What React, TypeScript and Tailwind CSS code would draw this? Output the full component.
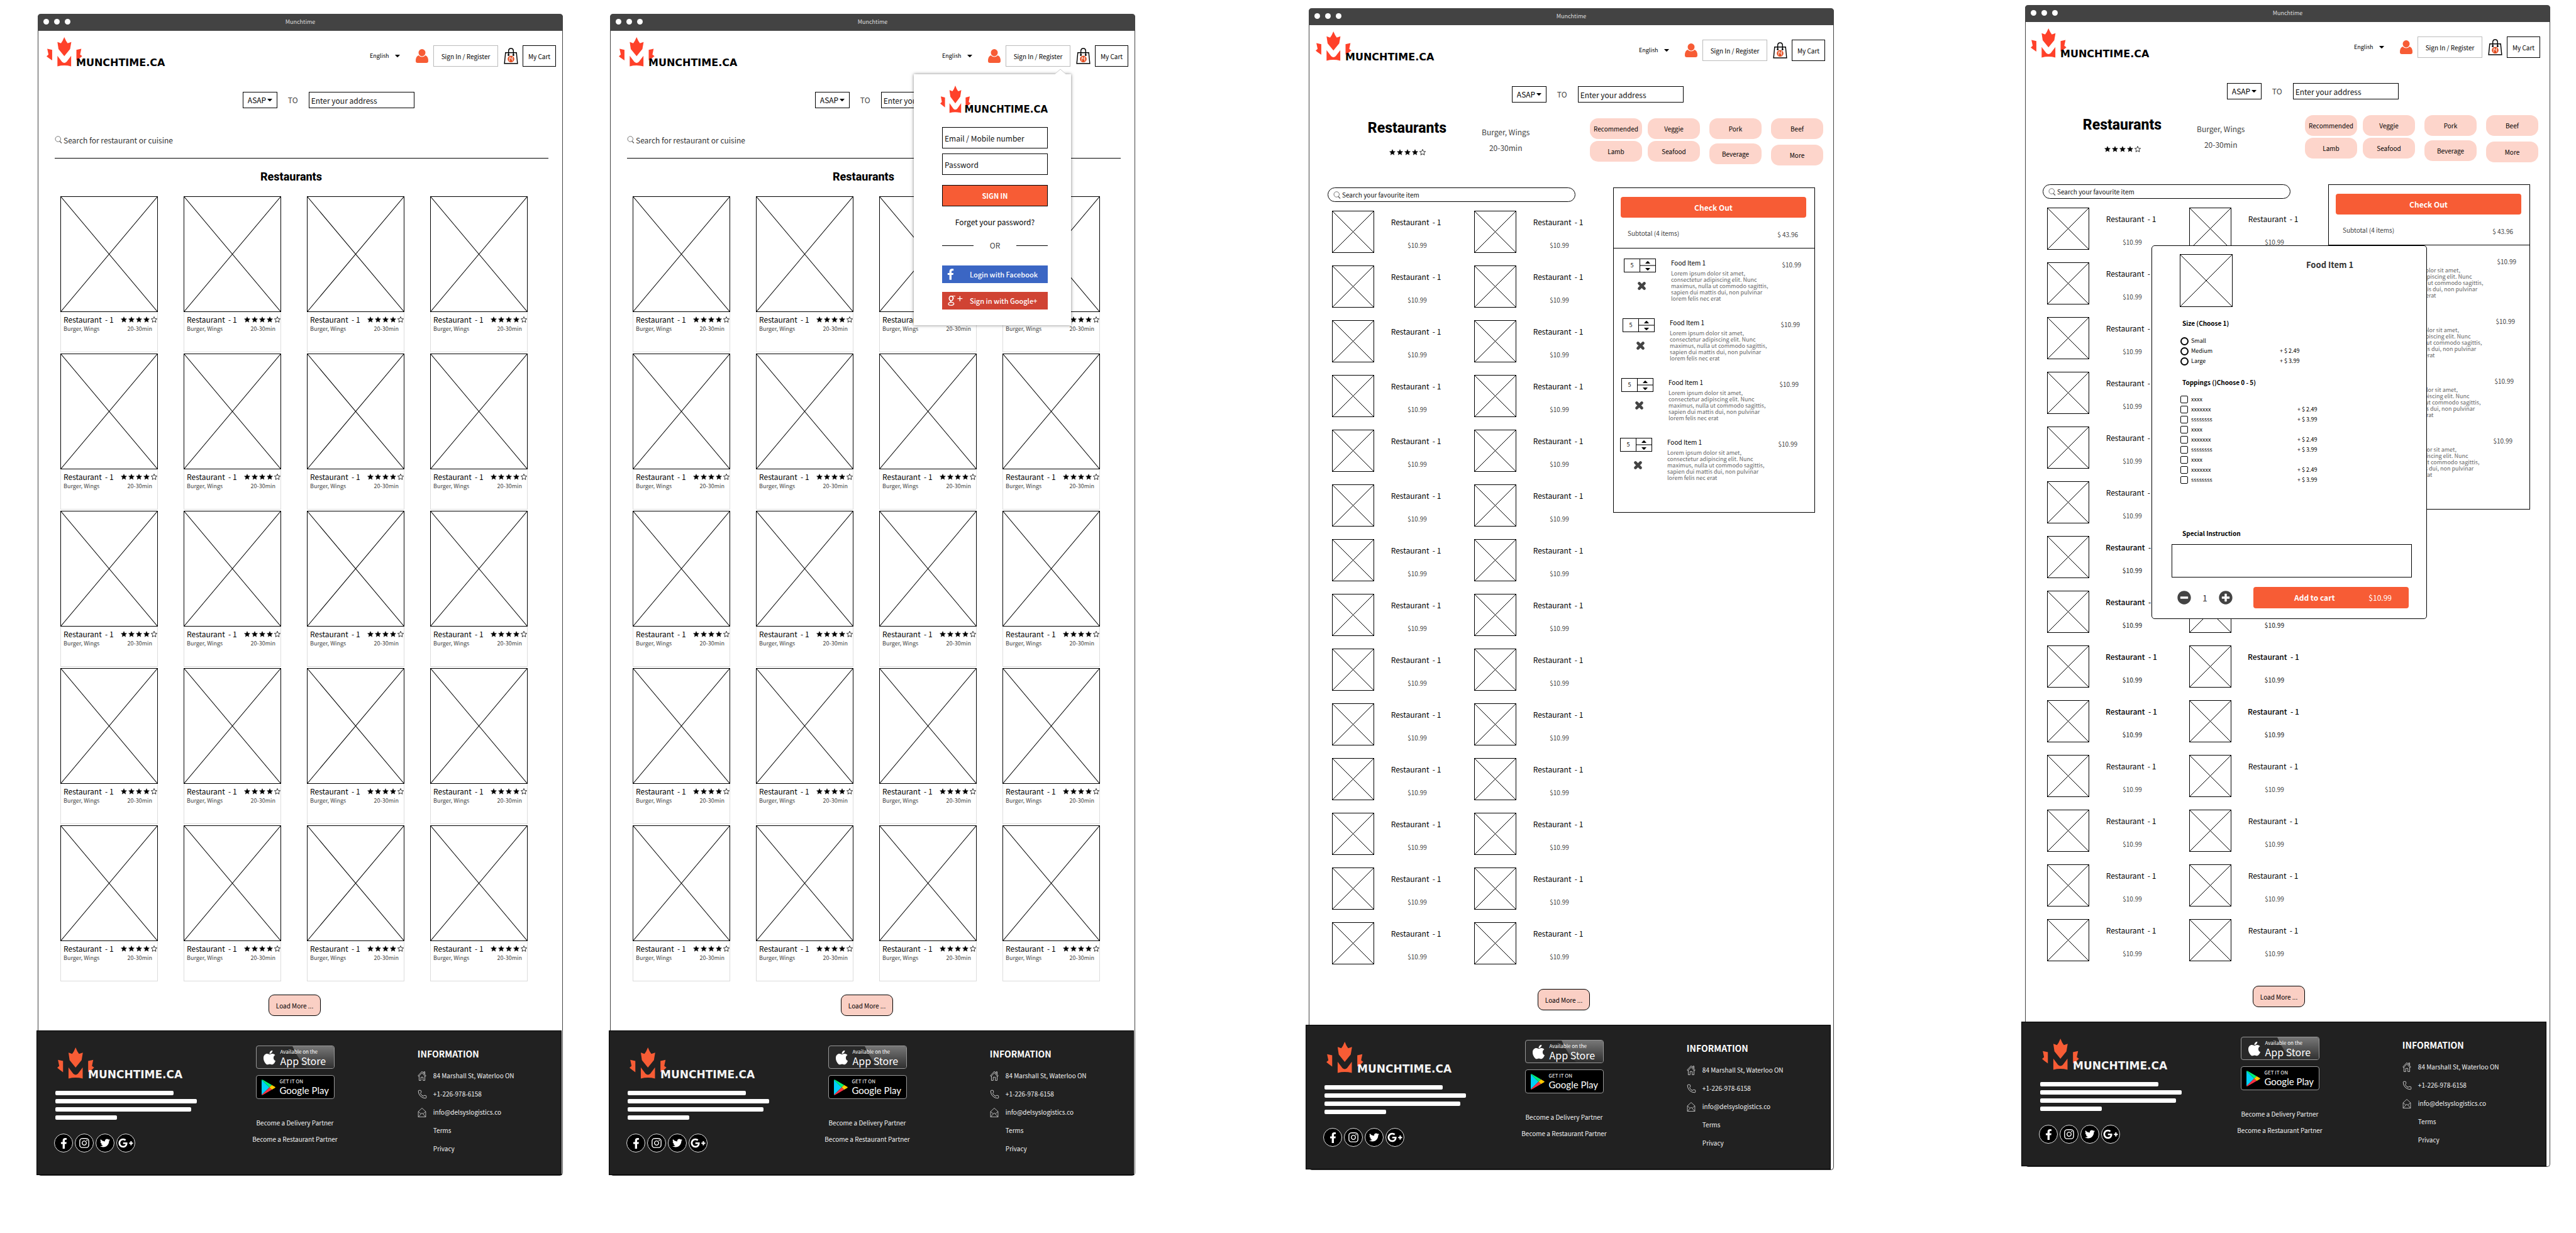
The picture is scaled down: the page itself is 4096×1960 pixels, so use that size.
import type { ReactNode } from 'react';
import {
  FaApple,
  FaFacebookF,
  FaGooglePlusG,
  FaInstagram,
  FaMinusCircle,
  FaPlusCircle,
  FaTwitter,
} from 'react-icons/fa';
import { Phone } from 'lucide-react';

/* ---------- drawings ---------- */

const logoSizes = {
  header: { leaf: 'h-[47px] w-[57px] text-[#ff412a]', word: 'text-[16px] leading-[12px] text-black' },
  popover: { leaf: 'h-[44px] w-[53px] text-[#ff412a]', word: 'text-[15px] leading-[11px] text-black' },
  footer: { leaf: 'h-[50px] w-[59px] text-[#f75c35]', word: 'text-[17px] leading-[13px] text-[#f5f5f5]' },
};

function Logo({ size }: { size: keyof typeof logoSizes }) {
  const s = logoSizes[size];
  return (
    <a href="#home" className="flex items-end">
      <svg viewBox="25 34 204 170" preserveAspectRatio="none" className={s.leaf} fill="currentColor" aria-hidden="true">
        <path d="M126 34 L136 56 L145 69 L166 62 L159 103 L126 143 L93 103 L87 62 L107 69 L116 56 Z" />
        <path d="M87 142 L113 176 Q126 188 139 176 L165 142 V202 Q126 192 87 202 Z" />
        <path d="M195 107 L223 101 L216 134 L228 143 L218 152 L195 168 Z" />
        <path d="M57 107 L29 101 L36 134 L25 144 L36 153 L57 168 Z" />
      </svg>
      <span className={`-ml-[10px] font-['DejaVu_Sans',sans-serif] font-bold ${s.word}`}>MUNCHTIME.CA</span>
    </a>
  );
}

function Star({ filled }: { filled: boolean }) {
  return (
    <svg
      viewBox="0 0 20 20"
      className="size-[10px]"
      fill={filled ? '#000' : 'none'}
      stroke="#000"
      strokeWidth={filled ? 0.6 : 1.6}
    >
      <path d="M10 1 L12.7 7.1 L19.3 7.7 L14.3 12.1 L15.8 18.7 L10 15.2 L4.2 18.7 L5.7 12.1 L0.7 7.7 L7.3 7.1 Z" />
    </svg>
  );
}

function Stars() {
  return (
    <span className="flex gap-[2px]" role="img" aria-label="4 out of 5 stars">
      {[true, true, true, true, false].map((f, i) => (
        <Star key={i} filled={f} />
      ))}
    </span>
  );
}

function Caret({ className }: { className: string }) {
  return (
    <svg viewBox="0 0 10 5" className={`h-[4px] w-[8px] ${className}`} aria-hidden="true">
      <path d="M0 0 H10 L5.8 4.6 Q5 5 4.2 4.6 Z" fill="#000" />
    </svg>
  );
}

function Placeholder({ className }: { className: string }) {
  return (
    <div className={`border border-black ${className}`}>
      <svg viewBox="0 0 100 100" preserveAspectRatio="none" className="block size-full" aria-hidden="true">
        <path d="M0 0 L100 100 M100 0 L0 100" stroke="#000" strokeWidth="1" vectorEffect="non-scaling-stroke" />
      </svg>
    </div>
  );
}

function SearchIcon() {
  return (
    <svg viewBox="0 0 24 24" className="size-[12px] shrink-0" fill="none" stroke="#555" strokeWidth="1.6" aria-hidden="true">
      <circle cx="10.5" cy="10" r="8.5" />
      <path d="M16 17 L22 23" strokeWidth="2.6" />
    </svg>
  );
}

function UserIcon() {
  return (
    <svg viewBox="0 0 40 44" className="h-[22px] w-[20px]" fill="#f75c35" aria-hidden="true">
      <ellipse cx="20" cy="11.5" rx="11" ry="11.5" />
      <path d="M9 20 Q14 25 20 25 Q26 25 31 20 Q40 23 40 38 Q40 44 34 44 H6 Q0 44 0 38 Q0 23 9 20 Z" />
    </svg>
  );
}

function BagIcon() {
  return (
    <svg viewBox="0 0 46 54" className="h-[26px] w-[23px]" aria-hidden="true">
      <path d="M5 16 H41 L44.5 52 H1.5 Z" fill="#fff" stroke="#000" strokeWidth="3" />
      <path d="M15 24 V11 Q15 2 23 2 Q31 2 31 11 V24" fill="none" stroke="#000" strokeWidth="3" />
      <circle cx="15" cy="24" r="3" fill="#000" />
      <circle cx="31" cy="24" r="3" fill="#000" />
      <circle cx="23" cy="37" r="11" fill="#e2491c" />
      <path d="M18 30 V44 M21 30 V36 H18 M28 44 V30 Q25 32 25 38 H28" fill="none" stroke="#fff" strokeWidth="1.8" />
    </svg>
  );
}

function CrossIcon() {
  return (
    <svg viewBox="0 0 26 26" className="size-[15px]" stroke="#434343" strokeWidth="8" strokeLinecap="round" aria-hidden="true">
      <path d="M6 6 L20 20 M20 6 L6 20" />
    </svg>
  );
}

function HomeIcon() {
  return (
    <svg viewBox="0 0 24 28" className="h-[16px] w-[14px]" fill="none" stroke="#d8d8d8" strokeWidth="1.5" aria-hidden="true">
      <path d="M1 14 L12 2 L23 14 L21 16 L12 6 L3 16 Z M4 15 V27 H9 V18 H15 V27 H20 V15 M17 7 V3 H20 V10" />
    </svg>
  );
}

function MailIcon() {
  return (
    <svg viewBox="0 0 26 28" className="h-[15px] w-[14px]" fill="none" stroke="#d8d8d8" strokeWidth="1.5" aria-hidden="true">
      <path d="M2 11 L13 1 L24 11 V27 H2 Z M2 11 L10 18 M24 11 L16 18 M2 27 L13 15 L24 27" />
    </svg>
  );
}

function PlayIcon() {
  return (
    <svg viewBox="0 0 68 86" className="h-[25px] w-[22px]" preserveAspectRatio="none" aria-hidden="true">
      <path d="M0 2 L38 43 L0 84 Z" fill="#00d0f8" />
      <path d="M0 2 Q2 0 6 2 L50 30 L38 43 Z" fill="#00f076" />
      <path d="M50 30 L66 40 Q69 43 66 46 L50 56 L38 43 Z" fill="#ffc900" />
      <path d="M0 84 Q2 87 6 84 L50 56 L38 43 Z" fill="#f83244" />
    </svg>
  );
}

function GooglePlusMark() {
  return (
    <svg viewBox="0 0 72 48" className="h-[16px] w-[24px]" fill="none" stroke="#fff" aria-hidden="true">
      <ellipse cx="16" cy="13" rx="9" ry="11" strokeWidth="5" />
      <path d="M16 2 H36 M24 4 Q29 8 27 15" strokeWidth="3" />
      <path d="M15 24 Q10 28 18 31 Q31 34 29 40 Q26 46 15 46 Q3 46 3 39 Q4 32 18 31" strokeWidth="4" />
      <path d="M58 2 V26 M46 14 H70" strokeWidth="4" />
    </svg>
  );
}

/* ---------- shared parts ---------- */

function Header() {
  return (
    <header className="flex items-end justify-between pt-[10px] pr-[10px] pl-[13px]">
      <Logo size="header" />
      <div className="flex items-center">
        <span className="relative mr-[25px] flex items-center">
          <select aria-label="Language" className="w-[48px] appearance-none bg-transparent text-[9px] leading-[12px]">
            <option>English</option>
          </select>
          <Caret className="pointer-events-none absolute right-0" />
        </span>
        <UserIcon />
        <button className="ml-[8px] h-[34px] w-[103px] border border-[#bbb] text-[10px]">Sign In / Register</button>
        <span className="mr-[7px] ml-[9px]">
          <BagIcon />
        </span>
        <button className="h-[34px] w-[53px] border border-black text-[10px]">My Cart</button>
      </div>
    </header>
  );
}

function DeliveryBar() {
  return (
    <form className="mt-[40px] flex items-center pl-[39%] text-[12px]">
      <span className="relative flex items-center">
        <select aria-label="Delivery time" className="h-[26px] w-[55px] appearance-none border border-black bg-white pl-[7px]">
          <option>ASAP</option>
        </select>
        <Caret className="pointer-events-none absolute right-[8px]" />
      </span>
      <span className="mx-[17px] text-[#434343]">TO</span>
      <input
        aria-label="Address"
        placeholder="Enter your address"
        className="h-[26px] w-[168px] border border-black px-[3px] placeholder:text-[#111]"
      />
    </form>
  );
}

function LoadMore({ className }: { className: string }) {
  return (
    <div className={`flex justify-center pr-[18px] pb-[23px] ${className}`}>
      <button className="h-[34px] w-[83px] rounded-[9px] border border-black bg-[#facfc4] text-[10px]">Load More ...</button>
    </div>
  );
}

function SocialLink({ label, children }: { label: string; children: ReactNode }) {
  return (
    <a
      href="#social"
      aria-label={label}
      className="flex size-[30px] items-center justify-center rounded-full border border-[#ddd] bg-black text-white"
    >
      {children}
    </a>
  );
}

function Footer({ className }: { className: string }) {
  return (
    <footer
      className={`relative grid h-[230px] grid-cols-[340fr_142fr_353fr] border border-black bg-[#212121] text-[10px] leading-[14px] text-[#f2f2f2] ${className}`}
    >
      <div className="pt-[26px] pl-[29px]">
        <div className="pl-[3px]">
          <Logo size="footer" />
        </div>
        <div className="mt-[19px] flex flex-col gap-[6px]">
          <div className="h-[7px] w-[188px] rounded-[2px] bg-white" />
          <div className="h-[7px] w-[225px] rounded-[2px] bg-white" />
          <div className="h-[7px] w-[216px] rounded-[2px] bg-white" />
          <div className="h-[7px] w-[98px] rounded-[2px] bg-white" />
        </div>
        <div className="mt-[22px] -ml-[2px] flex gap-[3px]">
          <SocialLink label="Facebook">
            <FaFacebookF className="size-[17px]" />
          </SocialLink>
          <SocialLink label="Instagram">
            <FaInstagram className="size-[18px]" />
          </SocialLink>
          <SocialLink label="Twitter">
            <FaTwitter className="size-[16px]" />
          </SocialLink>
          <SocialLink label="Google Plus">
            <FaGooglePlusG className="size-[24px]" />
          </SocialLink>
        </div>
      </div>
      <div className="flex flex-col items-center pt-[23px]">
        <a
          href="#app-store"
          className="relative flex h-[37px] w-[125px] items-center overflow-hidden rounded-[4px] border border-[#999] bg-[#292929] pl-[10px] text-white"
        >
          <svg viewBox="0 0 125 37" preserveAspectRatio="none" className="absolute inset-0 size-full" aria-hidden="true">
            <defs>
              <linearGradient id="shine" x1="0" y1="0" x2="0" y2="1">
                <stop offset="0" stopColor="#777" />
                <stop offset="1" stopColor="#303030" />
              </linearGradient>
            </defs>
            <path d="M58 0 H125 V37 H82 Q68 24 58 0 Z" fill="url(#shine)" />
          </svg>
          <FaApple className="relative h-[26px] w-[21px]" />
          <span className="relative ml-[7px] flex flex-col">
            <span className="text-[8px] leading-[10px]">Available on the</span>
            <span className="text-[16px] leading-[18px]">App Store</span>
          </span>
        </a>
        <a
          href="#google-play"
          className="mt-[10px] flex h-[38px] w-[125px] items-center rounded-[4px] border border-[#999] bg-black pl-[8px] text-white"
        >
          <PlayIcon />
          <span className="ml-[7px] flex flex-col">
            <span className="text-[8px] leading-[10px]">GET IT ON</span>
            <span className="font-['Lato',sans-serif] text-[15px] leading-[18px]">Google Play</span>
          </span>
        </a>
        <a href="#delivery" className="mt-[31px]">
          Become a Delivery Partner
        </a>
        <a href="#restaurant" className="mt-[12px] whitespace-nowrap">
          Become a Restaurant Partner
        </a>
      </div>
      <div className="pt-[26px] pl-[124px]">
        <h2 className="text-[14px] leading-[20px] font-bold text-white">INFORMATION</h2>
        <address className="mt-[18px] flex flex-col gap-[15px] not-italic">
          <span className="flex h-[14px] items-center gap-[11px]">
            <HomeIcon />
            84 Marshall St, Waterloo ON
          </span>
          <span className="flex h-[14px] items-center gap-[10px]">
            <Phone className="size-[15px]" strokeWidth={1.3} />
            +1-226-978-6158
          </span>
          <a href="mailto:info@delsyslogistics.co" className="flex h-[14px] items-center gap-[11px]">
            <MailIcon />
            info@delsyslogistics.co
          </a>
          <a href="#terms" className="pl-[25px]">
            Terms
          </a>
          <a href="#privacy" className="pl-[25px]">
            Privacy
          </a>
        </address>
      </div>
    </footer>
  );
}

function BrowserWindow({
  className,
  bodyClass,
  footerClass,
  overlay,
  children,
}: {
  className: string;
  bodyClass: string;
  footerClass: string;
  overlay?: ReactNode;
  children: ReactNode;
}) {
  return (
    <section className={`relative self-start rounded-[5px] border-x border-b border-[#434343] bg-white ${className}`}>
      <div className="relative -mx-px flex h-[27px] items-center gap-[8px] rounded-t-[5px] bg-[#434343] pb-[2px] pl-[9px]">
        <span className="size-[9px] rounded-full bg-white" />
        <span className="size-[9px] rounded-full bg-white" />
        <span className="size-[9px] rounded-full bg-white" />
        <span className="absolute inset-x-0 text-center text-[9px] leading-[12px] text-[#ddd]">Munchtime</span>
      </div>
      <div className={bodyClass}>
        <Header />
        <DeliveryBar />
        {children}
      </div>
      <Footer className={footerClass} />
      {overlay}
    </section>
  );
}

/* ---------- restaurant list ---------- */

function RestaurantCard() {
  return (
    <article>
      <Placeholder className="aspect-[155/184]" />
      <div className="border-x border-b border-[#dcdcdc] pt-[4px] pb-[30px] pl-[4px]">
        <div className="flex items-center justify-between">
          <h3 className="text-[12px] leading-[16px] whitespace-pre">{'Restaurant  - 1'}</h3>
          <Stars />
        </div>
        <div className="mt-px flex justify-between pr-[8px] text-[9px] leading-[12px] text-[#434343]">
          <span>Burger, Wings</span>
          <span>20-30min</span>
        </div>
      </div>
    </article>
  );
}

function RestaurantList() {
  return (
    <main>
      <label className="mt-[40px] mr-[22px] ml-[26px] flex items-center gap-[2px] border-b border-black pb-[19px]">
        <SearchIcon />
        <input
          aria-label="Search restaurants"
          placeholder="Search for restaurant or cuisine"
          className="h-[20px] flex-1 text-[12px] placeholder:text-[#333]"
        />
      </label>
      <h1 className="mt-[17px] pr-[29px] text-center font-['Roboto',sans-serif] text-[18px] leading-[24px] font-extrabold">
        Restaurants
      </h1>
      <div className="mt-[19px] grid grid-cols-4 gap-x-[41px] gap-y-[2px] pr-[55px] pl-[35px]">
        {Array.from({ length: 20 }, (_, i) => (
          <RestaurantCard key={i} />
        ))}
      </div>
      <LoadMore className="mt-[21px]" />
    </main>
  );
}

function LoginPopover() {
  return (
    <div className="absolute top-[96px] right-[101px] w-[250px] bg-white pr-[37px] pb-[25px] pl-[45px] text-[12px] leading-[16px] shadow-[0_0_5px_rgba(0,0,0,0.5)]">
      <svg viewBox="0 0 18 9" className="absolute -top-[8px] right-[8px] h-[9px] w-[18px] overflow-visible" aria-hidden="true">
        <path d="M0 8 L9 0 L18 8" fill="#fff" stroke="#ccc" strokeWidth="1" />
        <path d="M0 9 L9 1 L18 9 Z" fill="#fff" />
      </svg>
      <form>
        <div className="-ml-[3px] pt-[18px]">
          <Logo size="popover" />
        </div>
        <input
          aria-label="Email or mobile number"
          placeholder="Email / Mobile number"
          className="mt-[22px] block h-[34px] w-full border border-black px-[3px] placeholder:text-[#111]"
        />
        <input
          type="password"
          aria-label="Password"
          placeholder="Password"
          className="mt-[8px] block h-[34px] w-full border border-black px-[3px] placeholder:text-[#111]"
        />
        <button className="mt-[16px] block h-[34px] w-full border border-black bg-[#f75c35] text-[11px] font-bold text-white">
          SIGN IN
        </button>
        <a href="#forgot" className="mt-[17px] block text-center">
          Forget your password?
        </a>
        <div className="mt-[21px] flex items-center justify-between text-[#434343]">
          <span className="h-px w-[50px] bg-black" />
          OR
          <span className="h-px w-[50px] bg-black" />
        </div>
        <button className="mt-[24px] flex h-[28px] w-full items-center bg-[#3b66c4] text-[11px] font-medium text-white">
          <span className="flex w-[44px] pl-[8px]">
            <FaFacebookF className="h-[18px] w-[11px]" />
          </span>
          Login with Facebook
        </button>
        <button className="mt-[14px] flex h-[28px] w-full items-center bg-[#d04333] text-[11px] font-medium text-white">
          <span className="flex w-[44px] pl-[9px]">
            <GooglePlusMark />
          </span>
          Sign in with Google+
        </button>
      </form>
    </div>
  );
}

/* ---------- restaurant menu ---------- */

const categories = [
  { top: 'Recommended', bottom: 'Lamb', className: 'gap-[3px]' },
  { top: 'Veggie', bottom: 'Seafood', className: 'ml-[9px] gap-[3px]' },
  { top: 'Pork', bottom: 'Beverage', className: 'ml-[15px] gap-[7px]' },
  { top: 'Beef', bottom: 'More', className: 'ml-[15px] gap-[9px]' },
];

const chip = 'h-[33px] w-[83px] rounded-[13px] bg-[#fdd5cb]';

function MenuItem({ strong }: { strong: boolean }) {
  return (
    <li className={`flex gap-[26px] ${strong ? 'font-medium' : ''}`}>
      <Placeholder className="size-[67px]" />
      <div className="w-[81px] pt-[10px] text-center">
        <h3 className="text-[12px] leading-[16px] whitespace-pre">{'Restaurant  - 1'}</h3>
        <p className="mt-[23px] pl-[4px] text-[10px] leading-[12px] text-[#434343]">$10.99</p>
      </div>
    </li>
  );
}

const cartRows = ['pl-[16px] pr-[21px]', 'pl-[14px] pr-[23px]', 'pl-[12px] pr-[25px]', 'pl-[10px] pr-[27px]'];

function CartRow({ className }: { className: string }) {
  return (
    <li className={`flex h-[95px] ${className}`}>
      <div className="w-[51px]">
        <div className="flex h-[22px] border border-black">
          <input aria-label="Quantity" defaultValue="5" className="w-[25px] min-w-0 border-r border-black text-center text-[9px]" />
          <div className="flex flex-1 flex-col">
            <button aria-label="Increase" className="flex flex-1 items-center justify-center border-b border-[#777]">
              <Caret className="rotate-180" />
            </button>
            <button aria-label="Decrease" className="flex flex-1 items-center justify-center border-t border-[#777]">
              <Caret className="" />
            </button>
          </div>
        </div>
        <button aria-label="Remove" className="mt-[14px] flex w-full justify-center pl-[6px]">
          <CrossIcon />
        </button>
      </div>
      <div className="ml-[24px]">
        <h3 className="text-[10px] leading-[14px]">Food Item 1</h3>
        <p className="mt-[5px] text-[9px] leading-[10px] whitespace-nowrap text-[#666]">
          Lorem ipsum dolor sit amet,
          <br />
          consectetur adipiscing elit. Nunc
          <br />
          maximus, nulla ut commodo sagittis,
          <br />
          sapien dui mattis dui, non pulvinar
          <br />
          lorem felis nec erat
        </p>
      </div>
      <span className="ml-auto pt-[3px] text-[10px] leading-[14px] text-[#434343]">$10.99</span>
    </li>
  );
}

function RestaurantMenu({ strongRows }: { strongRows: number[] }) {
  return (
    <main>
      <div className="mt-[25px] flex h-[76px] pr-[13px] pl-[97px]">
        <div className="flex w-[123px] flex-col items-center">
          <h1 className="font-['Roboto',sans-serif] text-[23px] leading-[32px] font-extrabold">Restaurants</h1>
          <div className="mt-[17px]">
            <Stars />
          </div>
        </div>
        <div className="ml-[57px] flex flex-col gap-[9px] pt-[14px] text-center text-[12px] leading-[16px] text-[#434343]">
          <span>Burger, Wings</span>
          <span>20-30min</span>
        </div>
        <div className="ml-auto flex text-[10px]">
          {categories.map((c) => (
            <div key={c.top} className={`flex flex-col ${c.className}`}>
              <button className={chip}>{c.top}</button>
              <button className={chip}>{c.bottom}</button>
            </div>
          ))}
        </div>
      </div>
      <div className="mt-[34px] grid grid-cols-[454fr_321fr] items-start pr-[26px] pl-[32px]">
        <div>
          <label className="mr-[60px] flex h-[23px] items-center gap-[2px] rounded-full border border-black pl-[8px]">
            <SearchIcon />
            <input
              aria-label="Search items"
              placeholder="Search your favourite item"
              className="flex-1 text-[10px] placeholder:text-[#111]"
            />
          </label>
          <ul className="mt-[14px] grid grid-cols-[auto_auto] justify-start gap-x-[52px] gap-y-[20px] pl-[7px]">
            {Array.from({ length: 28 }, (_, i) => (
              <MenuItem key={i} strong={strongRows.includes(Math.floor(i / 2))} />
            ))}
          </ul>
        </div>
        <aside className="border border-black pb-[23px]">
          <div className="border-b border-black pt-[14px] pr-[13px] pb-[14px] pl-[11px]">
            <button className="h-[33px] w-full rounded-[4px] bg-[#f75c35] text-[12px] font-bold text-white">Check Out</button>
            <div className="mt-[18px] flex justify-between pr-[13px] pl-[11px] text-[10px] leading-[14px] text-[#434343]">
              <span>Subtotal (4 items)</span>
              <span className="pt-[2px]">$ 43.96</span>
            </div>
          </div>
          <ul className="pt-[16px]">
            {cartRows.map((c) => (
              <CartRow key={c} className={c} />
            ))}
          </ul>
        </aside>
      </div>
      <LoadMore className="mt-[39px]" />
    </main>
  );
}

const sizes = [
  { name: 'Small', price: '' },
  { name: 'Medium', price: '+ $ 2.49' },
  { name: 'Large', price: '+ $ 3.99' },
];

const toppings = [
  { name: 'xxxx', price: '' },
  { name: 'xxxxxxx', price: '+ $ 2.49' },
  { name: 'ssssssss', price: '+ $ 3.99' },
];

function ItemDialog() {
  return (
    <div
      role="dialog"
      aria-label="Food Item 1"
      className="absolute top-[382px] left-[200px] w-[438px] rounded-[5px] border border-black bg-white pt-[13px] pb-[16px] text-[9px] leading-[16px]"
    >
      <div className="flex pl-[44px]">
        <Placeholder className="size-[84px]" />
        <h2 className="mt-[7px] ml-[117px] text-[13px] leading-[20px] font-bold text-[#333]">Food Item 1</h2>
      </div>
      <fieldset className="mt-[19px] pl-[45px]">
        <legend className="pl-[3px] text-[10px] leading-[14px] font-bold">Size (Choose 1)</legend>
        <div className="pt-[13px]">
          {sizes.map((s) => (
            <label key={s.name} className="grid h-[16px] grid-cols-[158px_auto] items-center justify-start">
              <span className="flex items-center gap-[4px]">
                <input type="radio" name="size" className="size-[13px] appearance-none rounded-full border-2 border-black" />
                {s.name}
              </span>
              <span>{s.price}</span>
            </label>
          ))}
        </div>
      </fieldset>
      <fieldset className="mt-[19px] pl-[45px]">
        <legend className="pl-[3px] text-[10px] leading-[14px] font-bold">Toppings ()Choose 0 - 5)</legend>
        <div className="pt-[12px]">
          {[...toppings, ...toppings, ...toppings].map((t, i) => (
            <label key={i} className="grid h-[16px] grid-cols-[186px_auto] items-center justify-start">
              <span className="flex items-center gap-[5px]">
                <input type="checkbox" className="size-[12px] appearance-none rounded-[2px] border border-black" />
                {t.name}
              </span>
              <span>{t.price}</span>
            </label>
          ))}
        </div>
      </fieldset>
      <label htmlFor="special" className="mt-[70px] block pl-[48px] text-[10px] leading-[14px] font-bold">
        Special Instruction
      </label>
      <div className="mt-[10px] pr-[23px] pl-[31px]">
        <textarea id="special" className="block h-[53px] w-full resize-none border border-black" />
      </div>
      <div className="mt-[15px] flex items-center pr-[28px] pl-[40px]">
        <button aria-label="Less">
          <FaMinusCircle className="size-[22px] text-[#434343]" />
        </button>
        <span className="w-[44px] text-center text-[14px] text-[#333]">1</span>
        <button aria-label="More">
          <FaPlusCircle className="size-[22px] text-[#434343]" />
        </button>
        <button className="ml-[33px] flex h-[34px] flex-1 items-center justify-between rounded-[4px] bg-[#f75c35] pr-[27px] pl-[65px] text-[12px] text-white">
          <span className="font-bold">Add to cart</span>
          <span>$10.99</span>
        </button>
      </div>
    </div>
  );
}

export default function App() {
  return (
    <div className="grid grid-cols-[60fr_835fr_75fr_835fr_276fr_835fr_304fr_835fr_41fr] bg-white font-['Noto_Sans_CJK_SC',sans-serif] text-black">
      <BrowserWindow className="col-start-2 mt-[22px]" bodyClass="" footerClass="-ml-[3px] mr-[1px]">
        <RestaurantList />
      </BrowserWindow>
      <BrowserWindow
        className="col-start-4 mt-[22px]"
        bodyClass=""
        footerClass="-ml-[3px] mr-[1px]"
        overlay={<LoginPopover />}
      >
        <RestaurantList />
      </BrowserWindow>
      <BrowserWindow className="col-start-6 mt-[13px]" bodyClass="-ml-[3px] mr-[3px]" footerClass="-ml-[6px] mr-[4px]">
        <RestaurantMenu strongRows={[]} />
      </BrowserWindow>
      <BrowserWindow
        className="col-start-8 mt-[8px]"
        bodyClass="-ml-[5px] mr-[5px]"
        footerClass="-ml-[7px] mr-[5px]"
        overlay={<ItemDialog />}
      >
        <RestaurantMenu strongRows={[6, 7, 8, 9]} />
      </BrowserWindow>
    </div>
  );
}
